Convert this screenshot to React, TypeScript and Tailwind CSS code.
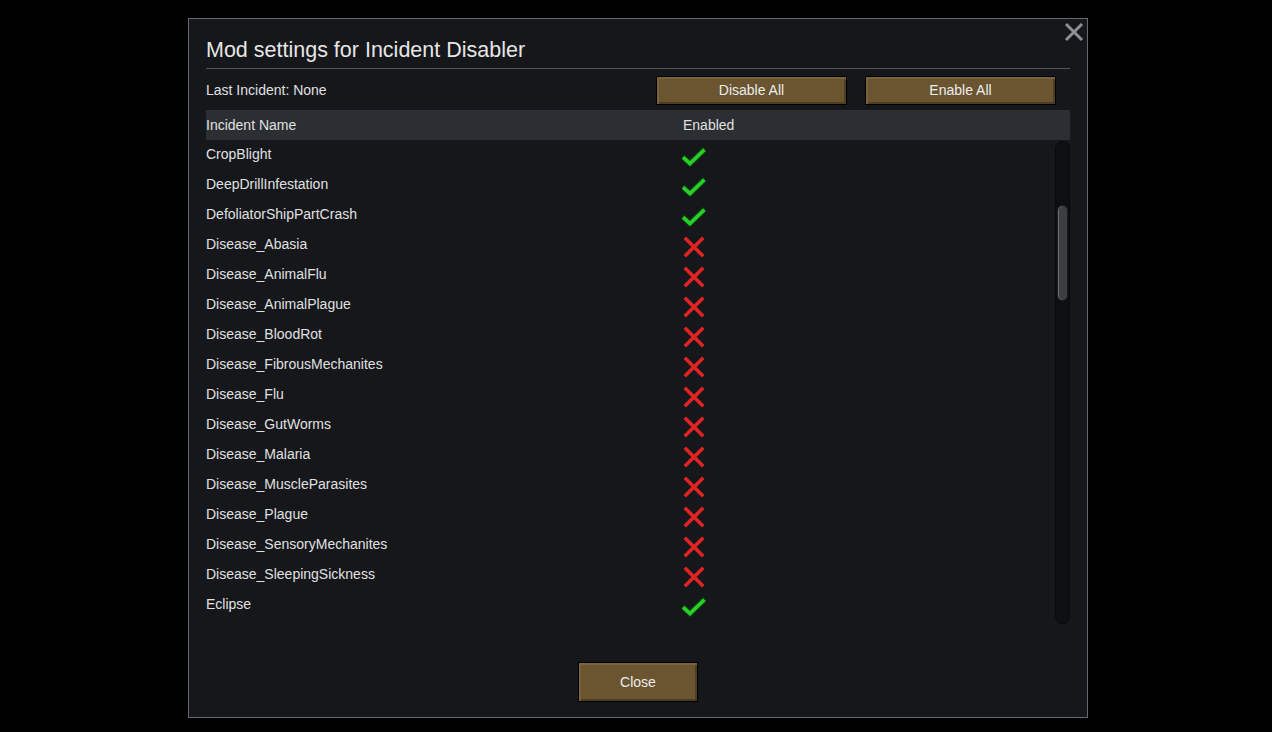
import React from 'react';

const incidents: Array<{ name: string; enabled: boolean }> = [
  { name: 'CropBlight', enabled: true },
  { name: 'DeepDrillInfestation', enabled: true },
  { name: 'DefoliatorShipPartCrash', enabled: true },
  { name: 'Disease_Abasia', enabled: false },
  { name: 'Disease_AnimalFlu', enabled: false },
  { name: 'Disease_AnimalPlague', enabled: false },
  { name: 'Disease_BloodRot', enabled: false },
  { name: 'Disease_FibrousMechanites', enabled: false },
  { name: 'Disease_Flu', enabled: false },
  { name: 'Disease_GutWorms', enabled: false },
  { name: 'Disease_Malaria', enabled: false },
  { name: 'Disease_MuscleParasites', enabled: false },
  { name: 'Disease_Plague', enabled: false },
  { name: 'Disease_SensoryMechanites', enabled: false },
  { name: 'Disease_SleepingSickness', enabled: false },
  { name: 'Eclipse', enabled: true },
];

const CheckIcon = () => (
  <svg width="24" height="24" viewBox="0 0 24 24">
    <path d="M2.5 13.5 L8 18.5 L21 6" fill="none" stroke="#0c4a0c" strokeWidth="5.5" strokeLinecap="square" />
    <path d="M2.5 13.5 L8 18.5 L21 6" fill="none" stroke="#2ad02a" strokeWidth="3.6" strokeLinecap="square" />
  </svg>
);

const CrossIcon = () => (
  <svg width="24" height="24" viewBox="0 0 24 24">
    <path d="M4 4 L20 20 M20 4 L4 20" fill="none" stroke="#e02424" strokeWidth="3.6" strokeLinecap="square" />
  </svg>
);

const WoodButton = ({ label, className }: { label: string; className: string }) => (
  <button
    className={`${className} border border-black bg-[#6b5530] text-[14px] text-[#ececec] shadow-[inset_2px_2px_0_#7a6339,inset_-2px_-2px_0_#4f3e22] flex items-center justify-center`}
  >
    {label}
  </button>
);

export default function App() {
  return (
    <div
      className="w-[1272px] h-[732px] bg-black relative overflow-hidden"
      style={{ fontFamily: '"Liberation Sans", Arial, sans-serif' }}
    >
      <div className="absolute left-[188px] top-[18px] w-[900px] h-[700px] bg-[#15171b] border border-[#646a72] flex flex-col px-[17px]">
        <button className="absolute right-[2px] top-[2px] w-[22px] h-[22px] flex items-center justify-center">
          <svg width="20" height="20" viewBox="0 0 20 20">
            <path d="M2 2 L18 18 M18 2 L2 18" stroke="#8d9196" strokeWidth="3" />
          </svg>
        </button>

        <div className="h-[50px] flex items-end pb-[2px] border-b border-[#55585c] text-[21.5px] text-[#e6e6e6]">
          Mod settings for Incident Disabler
        </div>

        <div className="h-[41px] flex items-center pt-[2px]">
          <span className="text-[14px] text-[#e0e0e0] w-[450px]">Last Incident: None</span>
          <WoodButton label="Disable All" className="w-[191px] h-[29px]" />
          <div className="w-[18px]" />
          <WoodButton label="Enable All" className="w-[191px] h-[29px]" />
        </div>

        <div className="h-[30px] bg-[#2b2e33] flex items-center text-[14px] text-[#e0e0e0]">
          <span className="w-[477px]">Incident Name</span>
          <span>Enabled</span>
        </div>

        <div className="flex h-[484px]">
          <div className="flex-1 overflow-hidden">
            {incidents.map((it) => (
              <div key={it.name} className="h-[30px] flex items-center text-[14px] text-[#e0e0e0]">
                <span className="w-[476px] pb-[1px]">{it.name}</span>
                <span className="pt-[4px]">{it.enabled ? <CheckIcon /> : <CrossIcon />}</span>
              </div>
            ))}
          </div>
          <div className="w-[15px] ml-[2px] mt-[1px] rounded-full bg-[#0e0f11] border border-[#08090a] relative">
            <div className="absolute left-[1px] top-[63px] w-[11px] h-[96px] rounded-full bg-[#3c3e42] border border-[#1c1d1f] shadow-[inset_1px_0_0_#6a6c70]" />
          </div>
        </div>

        <div className="flex-1 flex items-start justify-center pt-[38px]">
          <WoodButton label="Close" className="w-[120px] h-[40px]" />
        </div>
      </div>
    </div>
  );
}
